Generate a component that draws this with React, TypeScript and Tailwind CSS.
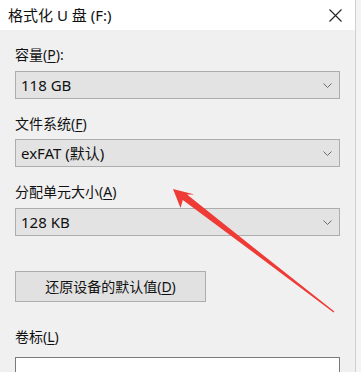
import React from 'react';

function Chevron() {
  return (
    <svg width="9" height="5" viewBox="0 0 9 5" className="shrink-0">
      <path d="M0.5 0.5 L4.5 4.5 L8.5 0.5" fill="none" stroke="#6b6b6b" strokeWidth="1" />
    </svg>
  );
}

function Label({ text, mnemonic, suffix = '', className = '' }: { text: string; mnemonic: string; suffix?: string; className?: string }) {
  return (
    <div className={`shrink-0 h-[20px] leading-[20px] text-[14px] text-[#111] ${className}`}>
      {text}(<span className="underline underline-offset-2">{mnemonic}</span>){suffix}
    </div>
  );
}

function Combo({ value, className = '' }: { value: string; className?: string }) {
  return (
    <div className={`shrink-0 h-[28px] flex items-center justify-between pl-[5px] pr-[7px] bg-[#e3e3e3] border border-[#adadad] text-[15px] text-[#111] ${className}`}>
      <span>{value}</span>
      <Chevron />
    </div>
  );
}

export default function App() {
  return (
    <div className="relative w-[361px] h-[372px] overflow-hidden flex bg-[#f0f0f0] font-['Noto_Sans','Noto_Sans_CJK_SC',sans-serif]">
      <div className="w-[355px] flex flex-col">
        {/* title bar */}
        <div className="shrink-0 h-[30px] bg-white flex items-center justify-between pl-[8px] pr-[13px]">
          <span className="text-[15px] text-[#111]">格式化 U 盘 (F:)</span>
          <svg width="13" height="13" viewBox="0 0 13 13">
            <path d="M0.5 0.5 L12.5 12.5 M12.5 0.5 L0.5 12.5" stroke="#222" strokeWidth="1.1" />
          </svg>
        </div>

        <div className="shrink-0 flex flex-col pl-[15px] pr-[15px] pt-[15px]">
          <Label text="容量" mnemonic="P" suffix=":" />
          <Combo value="118 GB" className="mt-[6px]" />

          <Label text="文件系统" mnemonic="F" className="mt-[15px]" />
          <Combo value="exFAT (默认)" className="mt-[5px]" />

          <Label text="分配单元大小" mnemonic="A" className="mt-[15px]" />
          <Combo value="128 KB" className="mt-[6px]" />

          <button className="shrink-0 mt-[35px] w-[191px] h-[31px] bg-[#e1e1e1] border border-[#adadad] text-[14px] text-[#111] flex items-center justify-center">
            还原设备的默认值(<span className="underline underline-offset-2">D</span>)
          </button>

          <Label text="卷标" mnemonic="L" className="mt-[25px]" />
          <div className="shrink-0 mt-[10px] h-[28px] bg-white border border-[#7a7a7a]" />
        </div>
      </div>

      {/* window edge */}
      <div className="w-[6px] flex">
        <div className="w-[1px] bg-[#cfcfcf]" />
        <div className="flex-1 bg-[#f4f4f4]" />
      </div>

      {/* red annotation arrow */}
      <svg className="absolute left-0 top-0 pointer-events-none" width="361" height="372" viewBox="0 0 361 372">
        <polygon
          points="173,189 194.5,194.5 187,194.4 253.5,247.5 334.4,311.5 333.6,312.5 251.1,250.7 182.8,200 180.5,208"
          fill="#ee3b36"
        />
      </svg>
    </div>
  );
}
